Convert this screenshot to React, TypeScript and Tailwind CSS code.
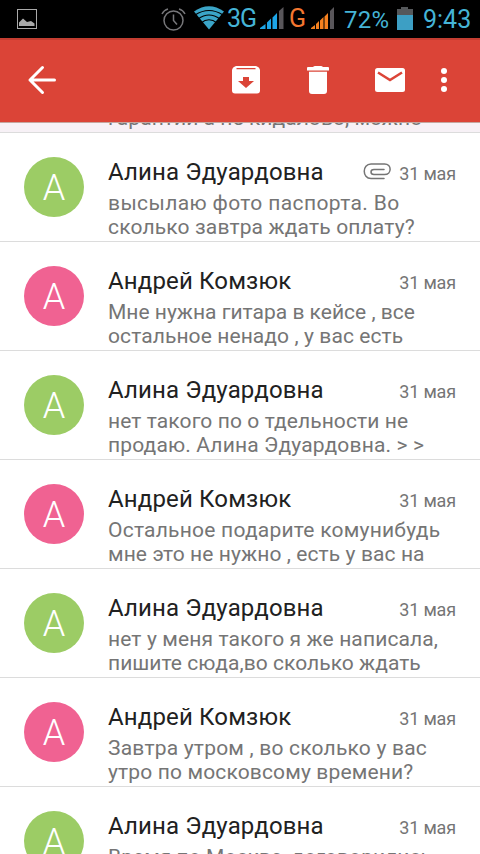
import React from "react";

type Line = { text: string; tracking: string };
type Mail = { name: string; lines: Line[]; green: boolean; clip?: boolean };

const mails: Mail[] = [
  { name: "Алина Эдуардовна", lines: [{ text: "высылаю фото паспорта. Во", tracking: "tracking-[0.38px]" }, { text: "сколько завтра ждать оплату?", tracking: "tracking-[0.15px]" }], green: true, clip: true },
  { name: "Андрей Комзюк", lines: [{ text: "Мне нужна гитара в кейсе , все", tracking: "tracking-[0px]" }, { text: "остальное ненадо , у вас есть", tracking: "tracking-[0.09px]" }], green: false },
  { name: "Алина Эдуардовна", lines: [{ text: "нет такого по о тдельности не", tracking: "tracking-[0.09px]" }, { text: "продаю. Алина Эдуардовна. > >", tracking: "tracking-[0.15px]" }], green: true },
  { name: "Андрей Комзюк", lines: [{ text: "Остальное подарите комунибудь", tracking: "tracking-[0.23px]" }, { text: "мне это не нужно , есть у вас на", tracking: "tracking-[0.09px]" }], green: false },
  { name: "Алина Эдуардовна", lines: [{ text: "нет у меня такого я же написала,", tracking: "tracking-[0.12px]" }, { text: "пишите сюда,во сколько ждать", tracking: "tracking-[0.04px]" }], green: true },
  { name: "Андрей Комзюк", lines: [{ text: "Завтра утром , во сколько у вас", tracking: "tracking-[0.2px]" }, { text: "утро по московсому времени?", tracking: "tracking-[0.14px]" }], green: false },
  { name: "Алина Эдуардовна", lines: [{ text: "Время по Москве, договорились", tracking: "tracking-[0.05px]" }], green: true },
];

function StatusBar() {
  return (
    <div className="flex h-[38px] shrink-0 bg-black pl-[17px] text-[#45b4d6]">
      <svg className="mt-[9px]" width="20" height="20" viewBox="0 0 20 20">
        <rect x=".5" y=".5" width="19" height="19" fill="none" stroke="#aaa" />
        <path d="M2 17V13.500L6 9.500L10 13L14 12L17.500 14.500V17Z" fill="#aaa" />
      </svg>
      <svg className="ml-[124px] mt-[7px]" width="25" height="25" viewBox="0 0 25 25" fill="none" stroke="#77777a" strokeWidth="1.500">
        <circle cx="12.500" cy="13.500" r="9.500" />
        <path d="M12.500 7.500V13.500L16 17.500M1 7Q3 3 7 2M18 2Q22 3 24 7" />
      </svg>
      <svg className="ml-[8px] mt-[5px]" width="30" height="25" viewBox="0 0 30 25">
        <path d="M0 6.500Q15 -4 30 6.500L15 24.500Z" fill="#3ba5c8" />
        <path d="M1 10Q15 1 29 10M4 14Q15 6 26 14M7 18Q15 11.500 23 18" fill="none" stroke="#000" strokeWidth="1.100" />
      </svg>
      <span className="ml-[3px] mt-[2px] w-[30px] whitespace-nowrap text-[25px] leading-[34px] tracking-[-1px]">3G</span>
      <svg className="ml-[3px] mt-[6px]" width="24" height="23" viewBox="0 0 24 23">
        <path d="M0 23V22L5.500 18V23ZM7 23V16.500L11 12.500V23ZM12.500 23V11.500L17 7V23Z" fill="#1da5e8" />
        <path d="M19 23V5L23.500 1V23Z" fill="#59565a" />
      </svg>
      <span className="ml-[5px] mt-[2px] w-[18px] text-[25px] leading-[34px] text-[#f47730]">G</span>
      <svg className="ml-[4px] mt-[6px]" width="24" height="23" viewBox="0 0 24 23">
        <path d="M0 23V22L4 19V23ZM5 23V18L8 15V23ZM9 23V14.500L12.500 11V23ZM13.500 23V10.500L17 7V23Z" fill="#f6811f" />
        <path d="M19 23V5L23 1V23Z" fill="#59565a" />
      </svg>
      <span className="ml-[9px] mt-[2px] w-[47px] whitespace-nowrap text-[24px] leading-[36px] tracking-[0.3px]">72%</span>
      <svg className="ml-[6px] mt-[6px]" width="16" height="24" viewBox="0 0 16 24">
        <path d="M0 3H4V1H11V3H16V9H0Z" fill="#55585b" />
        <path d="M0 9H16V24H0Z" fill="#3d9fc4" />
      </svg>
      <span className="ml-[10px] mt-[2px] whitespace-nowrap text-[25px] leading-[36px]">9:43</span>
    </div>
  );
}

function Toolbar() {
  return (
    <header className="h-[84px] shrink-0 border-t-2 border-[#c43d31] bg-[#db4437]">
      <div className="flex h-20 items-center pl-[27px]">
        <svg width="30" height="30" viewBox="0 0 30 30" fill="none" stroke="#fff" strokeWidth="3" strokeLinecap="round" strokeLinejoin="round">
          <path d="M27.500 15H3M15.500 2.500L3 15L15.500 27.500" />
        </svg>
        <svg className="ml-[175px]" width="28" height="28" viewBox="0 0 28 28">
          <path d="M4 0H24Q27.500 1 28 4V24.500Q28 27.500 25 27.500H3Q0 27.500 0 24.500V4Q.5 1 4 0Z" fill="#fff" />
          <path d="M4.500 2H23.500V3.200H4.500ZM11 11H17V15H22L14 22L6 15H11Z" fill="#db4437" />
        </svg>
        <svg className="ml-[47px]" width="22" height="28" viewBox="0 0 22 28" fill="#fff">
          <path d="M0 2Q0 1 1 1H6Q7 0 8 0H14Q15 0 16 1H21Q22 1 22 2V4.500H0ZM2 5.800H20V25Q20 28 17 28H5Q2 28 2 25Z" />
        </svg>
        <svg className="ml-[46px]" width="30" height="24" viewBox="0 0 30 24">
          <rect width="30" height="24" rx="2.500" fill="#fff" />
          <path d="M3 4.500L15 12L27 4.500" fill="none" stroke="#db4437" strokeWidth="2.500" />
        </svg>
        <svg className="ml-[36px]" width="6" height="26" viewBox="0 0 6 26" fill="#fff">
          <circle cx="3" cy="4" r="3" /><circle cx="3" cy="13" r="3" /><circle cx="3" cy="22" r="3" />
        </svg>
      </div>
    </header>
  );
}

function Row({ mail }: { mail: Mail }) {
  return (
    <article className="flex h-[109px] shrink-0 border-b border-[#dcdcdc] pl-6 pr-6 pt-6">
      <div className={`flex h-[60px] w-[60px] shrink-0 items-center justify-center rounded-full text-[36px] font-light leading-none text-white ${mail.green ? "bg-[#9ccc65]" : "bg-[#f06292]"}`}>
        <span className="pt-[1px]">А</span>
      </div>
      <div className="ml-6 min-w-0 flex-1">
        <div className="flex h-[30px] items-center whitespace-nowrap">
          <span className="text-[24px] leading-[30px] tracking-[0.15px] text-[#212121]">{mail.name}</span>
          <span className="flex-1" />
          {mail.clip && (
            <svg className="mb-[2px] mr-2" width="28" height="17" viewBox="0 0 28 17" fill="none" stroke="#757575" strokeWidth="1.500" strokeLinecap="round">
              <path d="M21 15.500H8C-1 15.500-1 1 8 1H21.500C29 1 29 11.500 21.500 11.500H11C7 11.500 7 6.500 11 6.500H21" />
            </svg>
          )}
          <span className="pt-[3px] text-[18px] leading-[26px] tracking-[-0.15px] text-[#757575]">31 мая</span>
        </div>
        <div className="whitespace-nowrap pt-1 text-[21px] leading-[24px] text-[#757575]">
          {mail.lines.map((line) => <div key={line.text} className={line.tracking}>{line.text}</div>)}
        </div>
      </div>
    </article>
  );
}

export default function App() {
  return (
    <div className="flex h-[854px] w-[480px] flex-col overflow-hidden bg-white font-[Roboto,'Noto_Sans',sans-serif]">
      <StatusBar />
      <Toolbar />
      <div className="flex h-[11px] shrink-0 items-end overflow-hidden border-b border-t border-b-[#dcdcdc] border-t-[#c5a69f] bg-[#f7f1f6] pl-[108px]">
        <div className="whitespace-nowrap pb-[2px] text-[21px] leading-[24px] tracking-[0.05px] text-[#757575]">гарантии а не кидалово, можно</div>
      </div>
      {mails.map((mail, i) => <Row key={i} mail={mail} />)}
    </div>
  );
}
